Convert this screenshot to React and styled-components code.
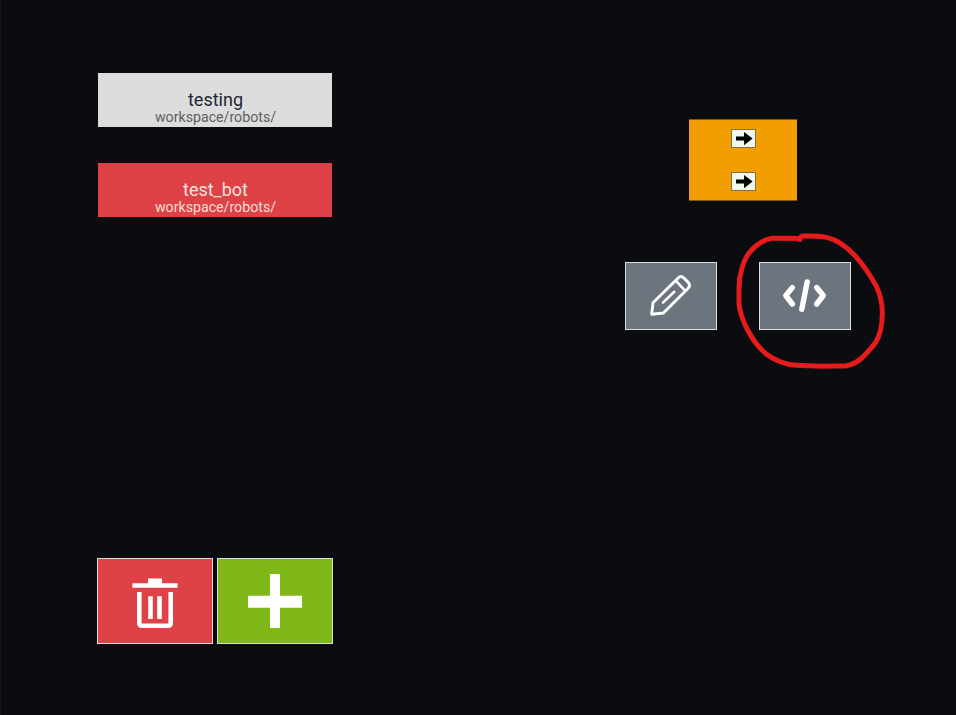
import React from 'react';
import styled, { createGlobalStyle } from 'styled-components';

const GlobalStyle = createGlobalStyle`
  * { box-sizing: border-box; }
  body { margin: 0; background: #0a0c10; font-family: Roboto, "Liberation Sans", sans-serif; }
`;

const Screen = styled.main`
  display: flex;
  gap: 292px;
  width: 956px;
  height: 715px;
  padding-left: 96px;
  border-left: 1px solid #15181b;
  background: #0a0c10;
  overflow: hidden;
`;

const Sidebar = styled.section`
  display: flex;
  flex-direction: column;
  justify-content: space-between;
  width: 236px;
  padding: 73px 0 71px;
`;

const RobotList = styled.div`
  display: flex;
  flex-direction: column;
  gap: 36px;
  padding: 0 1px;
`;

const RobotCard = styled.div`
  height: 54px;
  padding: 16px 0 0 1px;
  text-align: center;
  background: ${(p) => (p.$selected ? '#de4146' : '#dddddd')};
  color: ${(p) => (p.$selected ? '#f8e4dc' : '#202735')};
`;

const RobotName = styled.div`
  font-size: 18px;
  line-height: 21px;
`;

const RobotPath = styled.div`
  font-size: 14.2px;
  line-height: 14px;
  color: ${(p) => (p.$selected ? '#f8dfd6' : '#606060')};
`;

const Actions = styled.div`
  display: flex;
  gap: 4px;
`;

const tones = { danger: '#de4146', success: '#80b719', neutral: '#6c757d' };

const IconButton = styled.button`
  display: block;
  width: ${(p) => (p.$large ? 116 : 92)}px;
  height: ${(p) => (p.$large ? 86 : 68)}px;
  padding: 0;
  border: 1px solid #dddddd;
  background: ${(p) => tones[p.$tone]};
  color: #fff;

  svg { display: block; width: 100%; height: 100%; }
`;

const Workspace = styled.section`
  display: flex;
  flex-direction: column;
  width: 226px;
  padding-top: 119px;
`;

const Block = styled.div`
  display: flex;
  flex-direction: column;
  align-items: center;
  gap: 24px;
  width: 108px;
  height: 82px;
  margin-left: 64px;
  padding-top: 9px;
  border: 1px solid #8a560b;
  border-width: 1px 0;
  background: #f29e02;
`;

const Port = styled.div`
  width: 25px;
  height: 19px;
  border: 1px solid #85713b;
  background: #edf7ec;

  svg { display: block; }
`;

const Tools = styled.div`
  display: flex;
  justify-content: space-between;
  margin-top: 61px;
`;

const Marked = styled.div`
  position: relative;
`;

const Annotation = styled.svg`
  position: absolute;
  left: -29px;
  top: -37px;
  width: 160px;
  height: 150px;
  pointer-events: none;
`;

const ArrowPort = () => (
  <Port>
    <svg width="23" height="17" viewBox="0 0 23 17">
      <path d="M4 6.5H12V2L20.6 8.5 12 15.2V10.6H4Z" fill="#000" />
    </svg>
  </Port>
);

const TrashIcon = () => (
  <svg viewBox="0 0 114 84" fill="#fff">
    <path d="M34.4 24.2H50V19.4H64V24.2H79.6V28.8H34.4Z" />
    <path d="M50.2 37.2H54.8V60H50.2ZM59.2 37.2H63.8V60H59.2Z" />
    <path d="M41.3 33V64Q41.3 66.7 44 66.7H70Q72.7 66.7 72.7 64V33" fill="none" stroke="#fff" strokeWidth="4.6" />
  </svg>
);

const PlusIcon = () => (
  <svg viewBox="0 0 114 84" fill="#fff">
    <path d="M52 15H62V36.8H84V48.7H62V69H52V48.7H30V36.8H52Z" />
  </svg>
);

const PencilIcon = () => (
  <svg viewBox="0 0 90 66" fill="none" stroke="#fff" strokeWidth="2.9" strokeLinecap="round" strokeLinejoin="round">
    <path d="M25.7 51.2 27 39.8 52.4 14.8Q55 12.3 57.8 15L62.3 19.4Q64.9 22.2 62.4 24.9L37.4 50Z" />
    <path d="M50 17.8 59 27.6M37 39.6 48.3 28.8" strokeWidth="2.6" />
  </svg>
);

const CodeIcon = () => (
  <svg viewBox="0 0 90 66" fill="none" stroke="#fff" strokeWidth="5.4" strokeLinecap="round" strokeLinejoin="round">
    <path d="M32.3 24.6 25.8 32.5 32.3 41M47.2 19 41.8 46.3M56.7 24.6 63.3 32.5 56.7 41" />
  </svg>
);

const robots = [
  { name: 'testing', path: 'workspace/robots/', selected: false },
  { name: 'test_bot', path: 'workspace/robots/', selected: true },
];

export default function App() {
  return (
    <>
      <GlobalStyle />
      <Screen>
        <Sidebar>
          <RobotList>
            {robots.map((r) => (
              <RobotCard key={r.name} $selected={r.selected}>
                <RobotName>{r.name}</RobotName>
                <RobotPath $selected={r.selected}>{r.path}</RobotPath>
              </RobotCard>
            ))}
          </RobotList>
          <Actions>
            <IconButton $large $tone="danger" aria-label="Delete"><TrashIcon /></IconButton>
            <IconButton $large $tone="success" aria-label="Add"><PlusIcon /></IconButton>
          </Actions>
        </Sidebar>
        <Workspace>
          <Block>
            <ArrowPort />
            <ArrowPort />
          </Block>
          <Tools>
            <IconButton $tone="neutral" aria-label="Edit"><PencilIcon /></IconButton>
            <Marked>
              <IconButton $tone="neutral" aria-label="Code"><CodeIcon /></IconButton>
              <Annotation viewBox="0 0 480 450">
                <path
                  d="M210 43C205 40 195 40 180 40H123C105 44 82 57 65 75C50 90 42 107 36 130C29 152 27 170 27 190V235C29 265 40 290 53 315C68 344 88 370 110 388C135 407 165 419 200 421C245 425 300 423 347 423C366 419 380 412 392 402C408 388 424 368 436 354C450 332 457 300 457 265C457 230 452 210 438 182C422 153 402 122 375 92C350 65 320 44 290 37C265 32 240 33 220 33Q209 34 210 42"
                  fill="none" stroke="#e71b1c" strokeWidth="15" strokeLinecap="round" strokeLinejoin="round"
                />
              </Annotation>
            </Marked>
          </Tools>
        </Workspace>
      </Screen>
    </>
  );
}
